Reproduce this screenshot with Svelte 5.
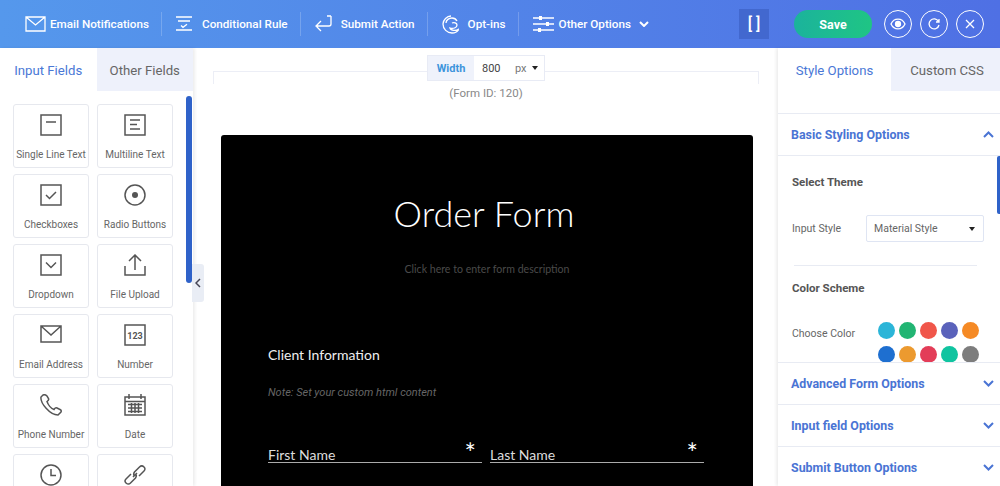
<script>
  const nav = [
    { label: 'Email Notifications', icon: 'M1 2h19v14H1z M1 2l9.500 8L20 2', w: 21, h: 18 },
    { label: 'Conditional Rule', icon: 'M0 2h16 M2 6h12 M0 15h16 M5 10.500l2 1.800 4-3', w: 17, h: 18 },
    { label: 'Submit Action', icon: 'M16 1v8a2 2 0 0 1-2 2H2 M6 6l-5 5 5 5 M12 1h4', w: 17, h: 18 },
    { label: 'Opt-ins', icon: 'M9 1c-4 0-8 4-8 8 0 5 4 9 9 9 3 0 6-2 7-4-3 2-8 2-9-1 3 1 7 0 7-3 0-2-3-3-5-2 M4 8c0-3 3-5 6-5 2 0 4 1 5 3', w: 17, h: 19 },
  ];

  // the last two cards are cut off by the window before their labels
  const fields = [
    { label: 'Single Line Text', d: 'M1 1h20v20H1z M6 8h10' },
    { label: 'Multiline Text', d: 'M1 1h20v20H1z M6 6h10 M6 10.500h7 M6 15h10' },
    { label: 'Checkboxes', d: 'M1 1h20v20H1z M6 11l3.500 3.500L16 8' },
    { label: 'Radio Buttons', d: 'M11 1a10 10 0 1 0 0 20a10 10 0 1 0 0-20z', dot: true },
    { label: 'Dropdown', d: 'M1 1h20v20H1z M6 8.500l5 5 5-5' },
    { label: 'File Upload', d: 'M1 12v9h20v-9 M11 16V1 M5 7l6-6 6 6' },
    { label: 'Email Address', d: 'M1 2h20v16H1z M1 2l10 9 10-9' },
    { label: 'Number', d: 'M1 1h20v20H1z', text: '123' },
    { label: 'Phone Number', d: 'M3 1L1 3c-1 6 9 18 17 18l3-3c.5-1 0-2-1-2.500l-3-1.500c-1-.5-2 0-3 1.500-3-1-6-5-7-8 1.500-1 2-2 1.500-3L7 2C6 1 4 .5 3 1z' },
    { label: 'Date', d: 'M1 3h20v18H1z M1 7.500h20 M5 0v5 M17 0v5 M4 10.500h14 M4 14h14 M4 17.500h14 M7.500 9v10 M11 9v10 M14.500 9v10' },
    { label: '', d: 'M11 1a10 10 0 1 0 0 20a10 10 0 1 0 0-20z M11 5v6.500h5' },
    { label: '', d: 'M9 13l4-4 M7 10l-5 5c-1.500 1.500-1 3 0 4s3 1.500 4.500 0l5-5c1-1.500 1-3 0-4 M15 12l5-5c1.500-1.500 1-3 0-4s-3-1.500-4.500 0l-5 5c-1 1.500-1 3 0 4' },
  ];

  const sections = ['Advanced Form Options', 'Input field Options', 'Submit Button Options'];

  const colors = ['#2bb5d8', '#22b573', '#f0564a', '#5a62bb', '#f58a25', '#1e6fd0', '#ec9a2f', '#e33d58', '#10c4a0', '#7d7d7d'];
</script>

<div class="page">
  <header>
    <nav>
      {#each nav as item}
        <div class="nav-item">
          <svg width={item.w} height={item.h} viewBox="0 0 {item.w} {item.h}"><path d={item.icon} /></svg>
          <span>{item.label}</span>
        </div>
      {/each}
      <div class="nav-item last">
        <svg width="21" height="18" viewBox="0 0 21 18">
          <path d="M0 3h21 M0 9h21 M0 15h21" />
          <path class="solid" d="M6 1h3v4H6z M13 7h3v4h-3z M5 13h3v4H5z" />
        </svg>
        <span>Other Options</span>
        <svg class="chev" width="10" height="6" viewBox="0 0 10 6"><path d="M1 1l4 4 4-4" /></svg>
      </div>
    </nav>
    <div class="actions">
      <div class="brackets">[ ]</div>
      <button class="save">Save</button>
      <div class="round">
        <svg width="16" height="12" viewBox="0 0 16 12"><path d="M1 6c3-6.500 11-6.500 14 0-3 6.500-11 6.500-14 0z" /><circle cx="8" cy="6" r="2.500" fill="#fff" /></svg>
      </div>
      <div class="round">
        <svg width="12" height="12" viewBox="0 0 12 12"><path d="M10.500 3.500A5 5 0 1 0 11 7 M11 1v3H8" /></svg>
      </div>
      <div class="round">
        <svg width="10" height="10" viewBox="0 0 10 10"><path d="M1 1l8 8 M9 1l-8 8" /></svg>
      </div>
    </div>
  </header>

  <main>
    <aside class="left">
      <div class="tabs">
        <div class="tab active">Input Fields</div>
        <div class="tab">Other Fields</div>
      </div>
      <div class="cards">
        {#each fields as f}
          <div class="card">
            <svg width="22" height="22" viewBox="0 0 22 22">
              <path d={f.d} />
              {#if f.dot}<circle class="dot" cx="11" cy="11" r="3" />{/if}
              {#if f.text}<text x="11" y="14.500" text-anchor="middle">{f.text}</text>{/if}
            </svg>
            {#if f.label}<span>{f.label}</span>{/if}
          </div>
        {/each}
      </div>
      <div class="scroll"></div>
      <div class="toggle">
        <svg width="6" height="10" viewBox="0 0 6 10"><path d="M5 1L1 5l4 4" /></svg>
      </div>
    </aside>

    <section class="canvas">
      <div class="frame">
        <div class="width-ctl">
          <span class="w-label">Width</span>
          <span class="w-value">800</span>
          <span class="w-unit">px</span>
          <i class="caret"></i>
        </div>
      </div>
      <div class="form-id">(Form ID: 120)</div>
      <div class="form">
        <h1>Order Form</h1>
        <p class="desc">Click here to enter form description</p>
        <h2>Client Information</h2>
        <p class="note">Note: Set your custom html content</p>
        <div class="inputs">
          <div class="input">First Name<b>*</b></div>
          <div class="input">Last Name<b>*</b></div>
        </div>
      </div>
    </section>

    <aside class="right">
      <div class="tabs">
        <div class="tab active">Style Options</div>
        <div class="tab">Custom CSS</div>
      </div>
      <div class="acc-head open">
        <span>Basic Styling Options</span>
        <svg width="11" height="7" viewBox="0 0 11 7"><path d="M1 6l4.500-4.500L10 6" /></svg>
      </div>
      <div class="acc-body">
        <h3>Select Theme</h3>
        <div class="row">
          <label for="style">Input Style</label>
          <div class="select" id="style">Material Style<i class="caret"></i></div>
        </div>
        <hr />
        <h3 class="scheme">Color Scheme</h3>
        <div class="row colors">
          <span class="lbl">Choose Color</span>
          <div class="swatches">
            {#each colors as c}
              <i style="background:{c}"></i>
            {/each}
          </div>
        </div>
        <div class="thumb"></div>
      </div>
      {#each sections as s}
        <div class="acc-head">
          <span>{s}</span>
          <svg width="11" height="7" viewBox="0 0 11 7"><path d="M1 1l4.500 4.500L10 1" /></svg>
        </div>
      {/each}
    </aside>
  </main>
</div>

<style>
  :global(body) {
    margin: 0;
    background: #fff;
  }

  .page {
    width: 1000px;
    height: 486px;
    overflow: hidden;
    font-family: Roboto, "Noto Sans", sans-serif;
    color: #555;
  }

  header {
    height: 48px;
    display: flex;
    align-items: center;
    justify-content: space-between;
    background: linear-gradient(90deg, #5598ec, #4f70e4);
    color: #fff;
  }

  header svg {
    fill: none;
    stroke: #fff;
    stroke-width: 1.3;
  }

  header svg .solid {
    fill: #fff;
    stroke: none;
  }

  nav {
    display: flex;
    align-items: center;
    padding-left: 25px;
  }

  .nav-item {
    display: flex;
    align-items: center;
    gap: 9px;
    padding-right: 12px;
    margin-right: 14px;
    border-right: 1px solid rgba(255, 255, 255, 0.2);
    height: 24px;
    font-size: 11.700px;
    font-weight: 500;
  }

  .nav-item:first-child {
    gap: 4px;
  }

  .nav-item.last {
    border: 0;
    gap: 5px;
    margin: 0;
  }

  .chev {
    margin-left: 3px;
    stroke-width: 2;
  }

  .actions {
    display: flex;
    align-items: center;
    padding-right: 16px;
  }

  .brackets {
    width: 30px;
    height: 30px;
    margin-right: 25px;
    background: #4268cf;
    font-size: 16px;
    font-weight: 500;
    line-height: 30px;
    text-align: center;
  }

  .save {
    width: 78px;
    height: 28px;
    margin-right: 12px;
    border: 0;
    border-radius: 14px;
    background: linear-gradient(90deg, #1bb39c, #1fc584);
    color: #fff;
    font: 700 12.500px Roboto, sans-serif;
  }

  .round {
    width: 28px;
    height: 28px;
    margin-left: 8px;
    box-sizing: border-box;
    border: 1.300px solid #fff;
    border-radius: 50%;
    display: flex;
    align-items: center;
    justify-content: center;
  }

  .save + .round {
    margin-left: 0;
  }

  main {
    height: 438px;
    display: flex;
  }

  .left,
  .right {
    position: relative;
    flex: none;
    background: #fff;
    z-index: 1;
  }

  .left {
    width: 193px;
    box-shadow: 2px 0 3px rgba(0, 0, 0, 0.07);
  }

  .right {
    width: 222px;
    box-shadow: -2px 0 3px rgba(0, 0, 0, 0.07);
  }

  .tabs {
    height: 43px;
    display: flex;
  }

  .tab {
    flex: 1;
    display: flex;
    align-items: center;
    justify-content: center;
    padding-top: 2px;
    box-sizing: border-box;
    background: #eef1fb;
    font-size: 13.200px;
    color: #666;
  }

  .tab.active {
    background: #fff;
    color: #4a78d6;
  }

  .cards {
    display: grid;
    grid-template-columns: 76px 76px;
    grid-auto-rows: 64px;
    gap: 6px 8px;
    padding: 13px 0 0 13px;
  }

  .card {
    display: flex;
    flex-direction: column;
    align-items: center;
    padding-top: 9px;
    box-sizing: border-box;
    border: 1px solid #e6e8ee;
    border-radius: 3px;
    font-size: 10px;
    color: #666;
  }

  .card svg {
    fill: none;
    stroke: #555;
    stroke-width: 1.500;
  }

  .card svg .dot {
    fill: #555;
    stroke: none;
  }

  .card svg text {
    fill: #555;
    stroke: none;
    font: 700 9px Roboto, sans-serif;
  }

  .card span {
    margin-top: 13px;
    white-space: nowrap;
  }

  .scroll {
    position: absolute;
    left: 186px;
    top: 48px;
    width: 6px;
    height: 187px;
    border-radius: 3px;
    background: #2f62c9;
  }

  .toggle {
    position: absolute;
    left: 192px;
    top: 216px;
    width: 12px;
    height: 38px;
    display: flex;
    align-items: center;
    justify-content: center;
    background: #e9edf5;
    border-radius: 0 3px 3px 0;
  }

  .toggle svg {
    fill: none;
    stroke: #445;
    stroke-width: 1.500;
  }

  .canvas {
    flex: 1;
    min-width: 0;
    padding: 23px 0 0 20px;
  }

  .frame {
    position: relative;
    width: 544px;
    height: 12px;
    border: 1px solid #eceef6;
    border-bottom: 0;
  }

  .width-ctl {
    position: absolute;
    left: 213px;
    top: -17px;
    width: 118px;
    height: 26px;
    display: flex;
    align-items: center;
    background: #fff;
    border: 1px solid #e8ebf5;
    box-sizing: border-box;
    font-size: 11px;
  }

  .w-label {
    width: 46px;
    height: 100%;
    display: flex;
    align-items: center;
    justify-content: center;
    background: #eff2fb;
    color: #3d94dc;
    font-weight: 700;
  }

  .w-value {
    margin-left: 8px;
    width: 33px;
    color: #444;
  }

  .w-unit {
    color: #777;
  }

  .caret {
    display: block;
    width: 0;
    height: 0;
    border: 3.500px solid transparent;
    border-top: 4px solid #222;
    border-bottom: 0;
  }

  .width-ctl .caret {
    margin-left: 5px;
  }

  .form-id {
    margin-top: 2px;
    width: 546px;
    text-align: center;
    font-size: 11.500px;
    line-height: 14px;
    color: #888;
  }

  .form {
    width: 532px;
    height: 360px;
    margin: 35px 0 0 8px;
    padding: 56px 0 0 47px;
    box-sizing: border-box;
    background: #000;
    border-radius: 3px 3px 0 0;
    color: #fff;
    font-family: Lato, Inter, sans-serif;
  }

  h1 {
    margin: 0 0 0 -47px;
    padding-right: 6px;
    text-align: center;
    font-size: 36px;
    font-weight: 300;
    line-height: 44px;
  }

  .desc {
    margin: 27px 0 0 -47px;
    text-align: center;
    font-size: 10.600px;
    line-height: 14px;
    color: #4a4a4a;
  }

  h2 {
    margin: 70px 0 0;
    font-size: 14px;
    font-weight: 400;
    line-height: 18px;
    color: #eee;
  }

  .note {
    margin: 22px 0 0;
    font: italic 11px/14px Roboto, sans-serif;
    color: #666;
  }

  .inputs {
    display: grid;
    grid-template-columns: 214px 214px;
    gap: 8px;
    margin-top: 39px;
  }

  .input {
    position: relative;
    height: 24px;
    box-sizing: border-box;
    border-bottom: 1px solid #aaa;
    font-size: 14px;
    line-height: 31px;
    color: #ddd;
  }

  .input b {
    position: absolute;
    right: 6px;
    top: 2px;
    font-size: 27px;
    font-weight: 400;
    line-height: 24px;
    color: #fff;
  }

  .right .tab:first-child {
    flex: 0 0 113px;
  }

  .right .tab:last-child {
    padding-left: 3px;
  }

  .acc-head {
    height: 43px;
    padding: 0 6px 2px 13px;
    margin-top: -1px;
    display: flex;
    align-items: center;
    justify-content: space-between;
    box-sizing: border-box;
    border-top: 1px solid #e8ebf3;
    background: #fff;
    color: #4a74d4;
    font-size: 12.400px;
    font-weight: 700;
    position: relative;
  }

  .acc-head svg {
    fill: none;
    stroke: #4a74d4;
    stroke-width: 2;
  }

  .acc-head.open {
    margin-top: 22px;
    padding-bottom: 0;
    border-bottom: 1px solid #e8ebf3;
  }

  .acc-body {
    position: relative;
    height: 207px;
    overflow: hidden;
    padding: 19px 16px 0 14px;
    box-sizing: border-box;
  }

  h3 {
    margin: 0;
    font-size: 11.500px;
    font-weight: 700;
    line-height: 14px;
    color: #555;
  }

  h3.scheme {
    margin-top: 15px;
  }

  .row {
    display: flex;
    align-items: center;
    font-size: 10.500px;
    color: #666;
  }

  .row label {
    flex: 0 0 74px;
  }

  h3 + .row {
    margin-top: 26px;
  }

  .select {
    width: 118px;
    height: 27px;
    padding: 0 8px 0 7px;
    display: flex;
    align-items: center;
    justify-content: space-between;
    box-sizing: border-box;
    border: 1px solid #dfe5f3;
    border-radius: 2px;
  }

  hr {
    margin: 23px 7px 0 2px;
    border: 0;
    border-top: 1px solid #e8ebf3;
  }

  h3 + .row.colors {
    margin-top: 27px;
    align-items: flex-start;
  }

  .lbl {
    margin-top: 5px;
    flex: 0 0 86px;
  }

  .swatches {
    display: grid;
    grid-template-columns: repeat(5, 17px);
    gap: 7px 4px;
  }

  .swatches i {
    width: 17px;
    height: 17px;
    border-radius: 50%;
  }

  .thumb {
    position: absolute;
    right: 0;
    top: 0;
    width: 3px;
    height: 58px;
    border-radius: 2px 0 0 2px;
    background: #2f62c9;
  }
</style>
